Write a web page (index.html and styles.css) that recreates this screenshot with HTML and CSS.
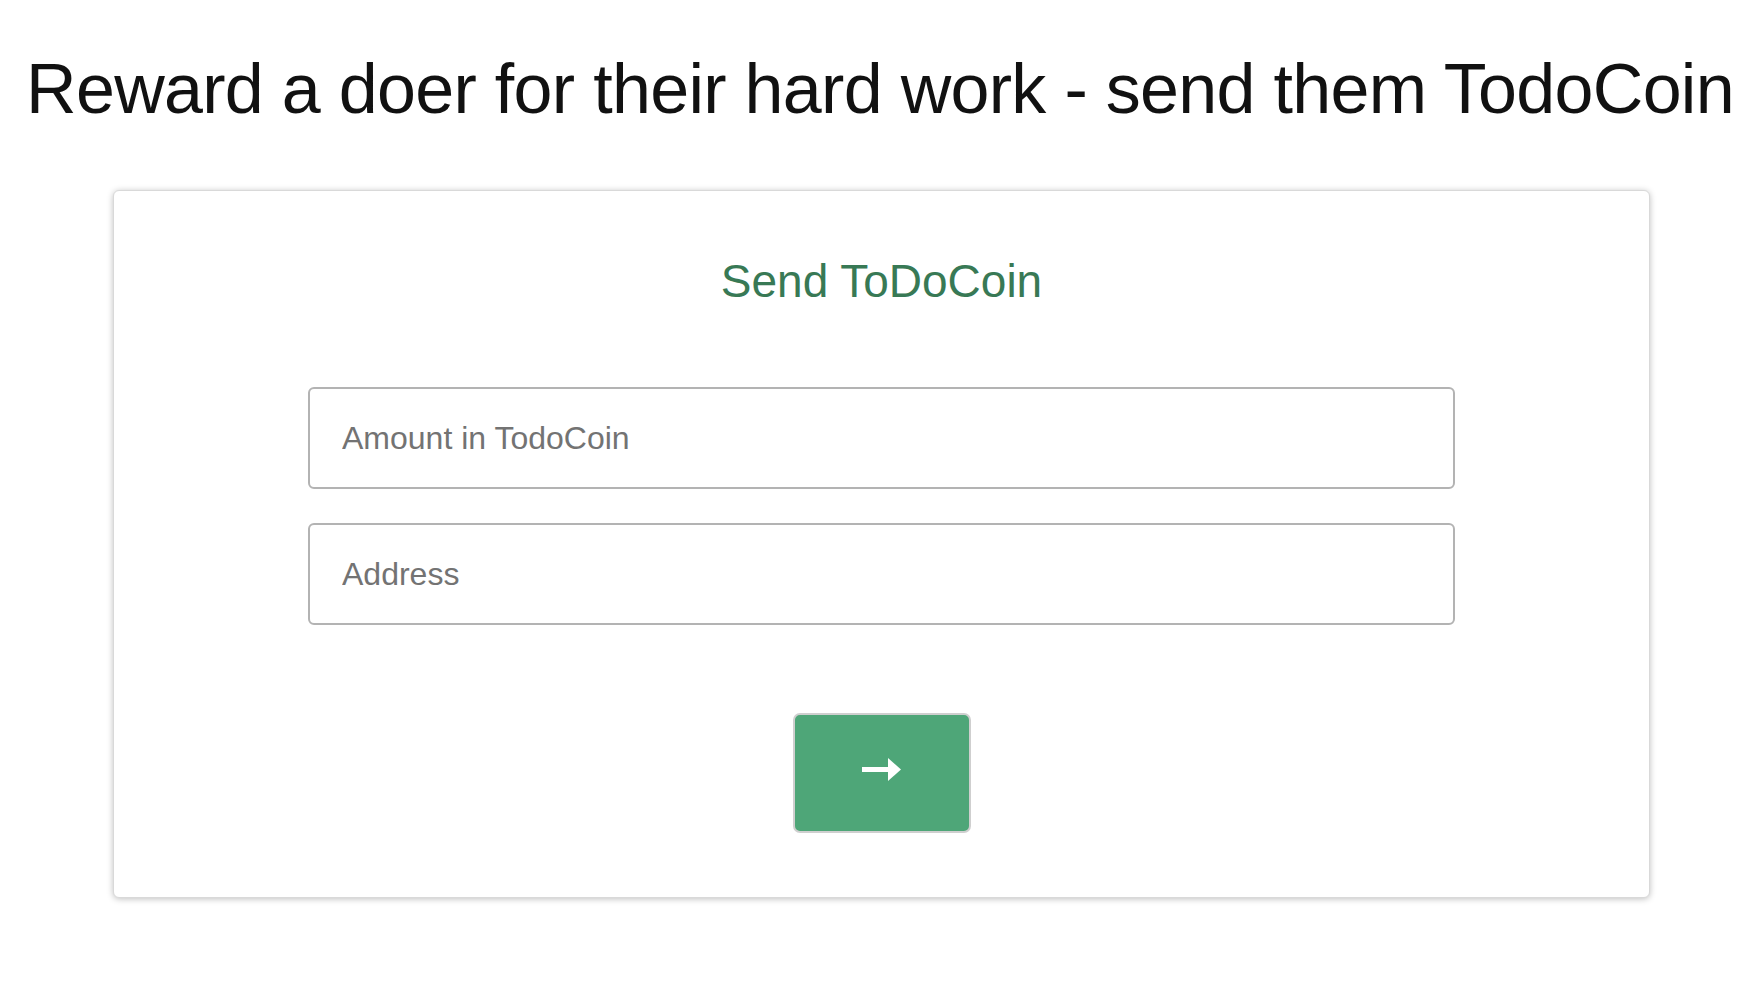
FILE: index.html
```html
<!DOCTYPE html>
<html lang="en">
<head>
    <meta charset="UTF-8">
    <meta name="viewport" content="width=device-width, initial-scale=1.0">
    <title>Send ToDoCoin</title>
    <link rel="stylesheet" href="styles.css">
</head>
<body>
    <h1 class="title">Reward a doer for their hard work - send them TodoCoin</h1>

    <div class="card">
        <h2 class="card-title">Send ToDoCoin</h2>
        <div class="fields">
            <input type="text" id="amount" placeholder="Amount in TodoCoin">
            <input type="text" id="address" placeholder="Address">
        </div>
        <button class="send" onclick="send()">
            <svg width="40" height="24" viewBox="0 0 40 24">
                <rect x="0" y="9" width="30" height="5" fill="#fff"/>
                <polygon points="26,0 39,11.5 26,23" fill="#fff"/>
            </svg>
        </button>
    </div>

    <script>
        function send() {
            const amount = document.getElementById("amount").value;
            const address = document.getElementById("address").value;
            if (!amount || !address) {
                alert("Please fill in amount and address.");
                return;
            }
            alert("Sent " + amount + " TodoCoin to " + address);
        }
    </script>
</body>
</html>
```

FILE: styles.css
```css
body {
    font-family: "Liberation Sans", Arial, sans-serif;
    background-color: #fff;
    margin: 0;
    padding: 48px 8px 92px;
}
.title {
    font-size: 70px;
    font-weight: normal;
    letter-spacing: -0.7px;
    line-height: 82px;
    color: #111;
    text-align: center;
    white-space: nowrap;
    margin: 0 0 60px;
}
.card {
    box-sizing: border-box;
    width: 1537px;
    height: 708px;
    margin: 0 0 0 105px;
    padding: 63px 194px 0;
    background: white;
    border: 1px solid #d9d9d9;
    border-radius: 6px;
    box-shadow: 0 1px 6px rgba(0, 0, 0, 0.25);
    display: flex;
    flex-direction: column;
    align-items: center;
}
.card-title {
    font-size: 46px;
    font-weight: normal;
    line-height: 54px;
    color: #387955;
    margin: 0 0 79px;
}
.fields {
    width: 100%;
    display: flex;
    flex-direction: column;
    gap: 34px;
}
input {
    box-sizing: border-box;
    display: block;
    width: 100%;
    height: 102px;
    padding: 0 32px;
    font-family: "Liberation Sans", Arial, sans-serif;
    font-size: 32px;
    color: #333;
    border: 2px solid #b3b3b3;
    border-radius: 6px;
    outline: none;
}
input::placeholder {
    color: #737373;
}
.send {
    box-sizing: border-box;
    margin-top: 88px;
    width: 178px;
    height: 120px;
    background-color: #4ea678;
    border: 2px solid #cfcfcf;
    border-radius: 7px;
    display: flex;
    justify-content: center;
    align-items: center;
    cursor: pointer;
}
.send svg {
    display: block;
    margin-bottom: 6px;
}
.send:hover {
    background-color: #43946a;
}
```
